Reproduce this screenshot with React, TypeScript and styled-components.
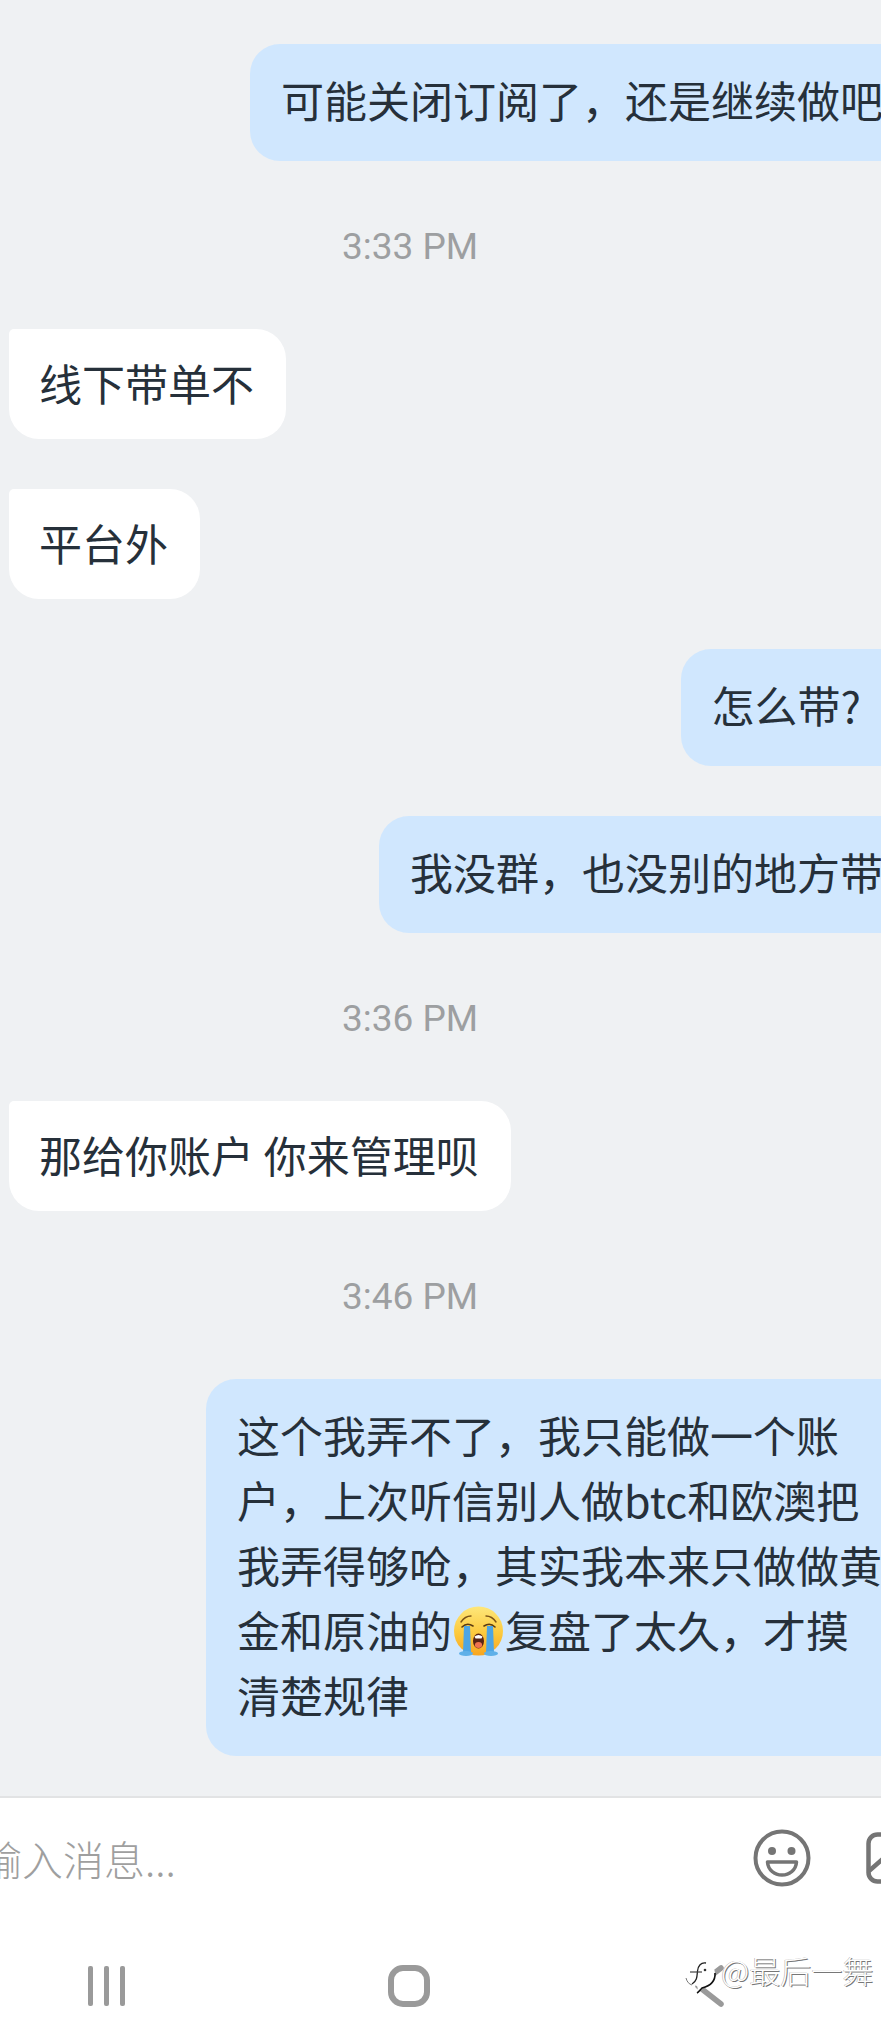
import React from 'react'
import styled, { createGlobalStyle } from 'styled-components'

const GlobalStyle = createGlobalStyle`
  html, body {
    margin: 0;
    padding: 0;
    width: 881px;
    height: 2024px;
    overflow: hidden;
    background: #eff1f3;
  }
`

const Page = styled.div`
  display: flex;
  flex-direction: column;
  width: 881px;
  height: 2024px;
  overflow: hidden;
  position: relative;
  font-family: 'Noto Sans CJK SC', 'Noto Sans', sans-serif;
`

const Thread = styled.div`
  display: flex;
  flex-direction: column;
  gap: 50px;
  flex: 1;
  width: 914px;
  padding-top: 44px;
  box-sizing: border-box;
`

const Bubble = styled.div`
  font-size: 43px;
  line-height: 65px;
  color: #26303a;
`

const SentBubble = styled(Bubble)<{ $inset?: number }>`
  align-self: flex-end;
  max-width: 646px;
  margin-right: ${({ $inset }) => $inset ?? 0}px;
  padding: 23px 31px 29px;
  background: #d0e7fe;
  border-radius: 30px 0 0 30px;
`

const ReceivedBubble = styled(Bubble)`
  align-self: flex-start;
  margin-left: 9px;
  padding: 21px 32px 24px 30px;
  background: #ffffff;
  border-radius: 5px 30px 30px 30px;
  white-space: pre;
`

const Stamp = styled.div`
  width: 820px;
  margin: 14px 0 10px;
  text-align: center;
  font-family: Roboto, 'Liberation Sans', sans-serif;
  font-size: 37px;
  line-height: 44px;
  color: #9d9fa1;
`

const Composer = styled.div`
  flex: 0 0 228px;
  box-sizing: border-box;
  background: #ffffff;
  border-top: 2px solid #e2e3e4;
`

const InputRow = styled.div`
  display: flex;
  align-items: center;
  height: 120px;
`

const Placeholder = styled.div`
  flex: 0 0 772px;
  margin-left: -19px;
  font-size: 41px;
  line-height: 50px;
  font-weight: 300;
  color: #9f9f9f;
`

const Tools = styled.div`
  display: flex;
  align-items: center;
  flex: 0 0 auto;
  gap: 55px;
`

const NavRow = styled.div`
  display: flex;
  align-items: center;
  gap: 263px;
  padding: 47px 0 0 88px;
`

const Watermark = styled.div`
  position: absolute;
  left: 684px;
  top: 1951px;
  display: flex;
  align-items: flex-start;
  gap: 3px;
  font-size: 31px;
  line-height: 38px;
  font-weight: 300;
  color: #ffffff;
  text-shadow: 1px 1px 0 #777777, -0.5px -0.5px 0 #aaaaaa;
  white-space: nowrap;
`

const LogoMark = styled.svg`
  flex: 0 0 auto;
  margin-top: 8px;
`

const InlineEmoji = styled.svg`
  display: inline-block;
  width: 53px;
  height: 52px;
  vertical-align: -10px;
`

function CryingFace() {
  return (
    <InlineEmoji viewBox="0 0 53 52">
      <defs>
        <linearGradient id="faceFill" x1="0" y1="0" x2="0" y2="1">
          <stop offset="0" stopColor="#fee77a" />
          <stop offset="0.55" stopColor="#fcc93d" />
          <stop offset="1" stopColor="#f8a51f" />
        </linearGradient>
      </defs>
      <circle cx="26.5" cy="25" r="24.5" fill="url(#faceFill)" />
      <path d="M9 16 Q13 10 19 10" fill="none" stroke="#7b5316" strokeWidth="1.4" strokeLinecap="round" />
      <path d="M44 16 Q40 10 34 10" fill="none" stroke="#7b5316" strokeWidth="1.4" strokeLinecap="round" />
      <path d="M10 21 Q15 16 21 20" fill="none" stroke="#5c3c12" strokeWidth="1.6" strokeLinecap="round" />
      <path d="M43 21 Q38 16 32 20" fill="none" stroke="#5c3c12" strokeWidth="1.6" strokeLinecap="round" />
      <path d="M12 20 L18 20 L19 47 L11 47 Z" fill="#4ea5e3" />
      <path d="M35 20 L41 20 L42 47 L34 47 Z" fill="#4ea5e3" />
      <ellipse cx="14" cy="47.5" rx="7" ry="2.4" fill="#5fb0e8" />
      <ellipse cx="39" cy="47.5" rx="7" ry="2.4" fill="#5fb0e8" />
      <ellipse cx="26.5" cy="35" rx="5.5" ry="7.5" fill="#5a2414" />
      <ellipse cx="26.5" cy="39" rx="3.6" ry="3" fill="#f0734f" />
      <path d="M22.5 30.5 Q26.5 27.5 30.5 30.5 L29.5 32.5 L23.5 32.5 Z" fill="#ffffff" />
    </InlineEmoji>
  )
}

function SmileIcon() {
  return (
    <svg width="58" height="58" viewBox="0 0 58 58" fill="none">
      <circle cx="29" cy="29" r="26.5" stroke="#757575" strokeWidth="4" />
      <circle cx="19" cy="22" r="4" fill="#757575" />
      <circle cx="38.5" cy="22" r="4" fill="#757575" />
      <path d="M14.5 33 H43.5 C43 41 36.5 46 29 46 C21.5 46 15 41 14.5 33 Z" stroke="#757575" strokeWidth="3.5" strokeLinejoin="round" />
    </svg>
  )
}

function ImageIcon() {
  return (
    <svg width="52" height="52" viewBox="0 0 52 52" fill="none">
      <rect x="2.5" y="2.5" width="47" height="47" rx="9" stroke="#757575" strokeWidth="4.5" />
      <path d="M3 39 L18 26 L30 38" stroke="#757575" strokeWidth="4.5" />
    </svg>
  )
}

function RecentsIcon() {
  return (
    <svg width="37" height="40" viewBox="0 0 37 40" fill="#9a9a9a">
      <rect x="0" y="0" width="5" height="40" rx="2" />
      <rect x="16" y="0" width="5" height="40" rx="2" />
      <rect x="32" y="0" width="5" height="40" rx="2" />
    </svg>
  )
}

function HomeIcon() {
  return (
    <svg width="42" height="42" viewBox="0 0 42 42" fill="none">
      <rect x="3" y="3" width="36" height="36" rx="12" stroke="#9a9a9a" strokeWidth="6" />
    </svg>
  )
}

function BackIcon() {
  return (
    <svg width="32" height="42" viewBox="0 0 32 42" fill="none">
      <path d="M28 3 L5 21 L28 39" stroke="#9a9a9a" strokeWidth="5.5" strokeLinecap="round" strokeLinejoin="round" />
    </svg>
  )
}

function WatermarkLogo() {
  return (
    <LogoMark width="34" height="38" viewBox="0 0 34 38" fill="none">
      <path d="M2 19 C1 9 9 3 18 3 C27 3 32 10 31 17 C30 24 24 27 18 29 C16 31 15 33 13 34 C14 31 14 29 13 27 C8 26 3 24 2 19 Z" fill="#ffffff" />
      <path d="M22 4 C17 3 14 7 13.5 12 C13 18 13 22 8 25" stroke="#222222" strokeWidth="1.3" />
      <path d="M6 13 H18" stroke="#444444" strokeWidth="1.2" />
      <path d="M31 14 C31.5 22 26 27 18 29 C16 31 15 33 13 34" stroke="#111111" strokeWidth="1.6" />
      <path d="M2 19 C3 23 5 25 8 26" stroke="#777777" strokeWidth="1" />
      <circle cx="21" cy="11" r="1.3" fill="#333333" />
    </LogoMark>
  )
}

export default function App() {
  return (
    <Page>
      <GlobalStyle />
      <Thread>
        <SentBubble>可能关闭订阅了，还是继续做吧</SentBubble>
        <Stamp>3:33 PM</Stamp>
        <ReceivedBubble>线下带单不</ReceivedBubble>
        <ReceivedBubble>平台外</ReceivedBubble>
        <SentBubble $inset={22}>怎么带?</SentBubble>
        <SentBubble>我没群，也没别的地方带</SentBubble>
        <Stamp>3:36 PM</Stamp>
        <ReceivedBubble>那给你账户 你来管理呗</ReceivedBubble>
        <Stamp>3:46 PM</Stamp>
        <SentBubble>
          这个我弄不了，我只能做一个账户，上次听信别人做btc和欧澳把我弄得够呛，其实我本来只做做黄金和原油的
          <CryingFace />
          复盘了太久，才摸清楚规律
        </SentBubble>
      </Thread>
      <Composer>
        <InputRow>
          <Placeholder>输入消息...</Placeholder>
          <Tools>
            <SmileIcon />
            <ImageIcon />
          </Tools>
        </InputRow>
        <NavRow>
          <RecentsIcon />
          <HomeIcon />
          <BackIcon />
        </NavRow>
      </Composer>
      <Watermark>
        <WatermarkLogo />
        <span>@最后一舞</span>
      </Watermark>
    </Page>
  )
}
